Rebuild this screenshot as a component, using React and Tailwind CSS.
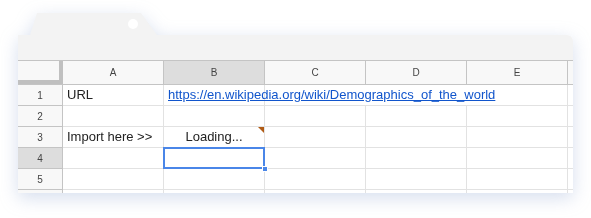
import React from 'react'

const COLS = ['A', 'B', 'C', 'D', 'E']
const font = { fontFamily: '"Liberation Sans", Arial, sans-serif' }

function HeaderCell({ label, active }) {
  return (
    <div
      className={`w-[101px] shrink-0 flex items-center justify-center text-[10px] text-[#444] border-r border-b border-[#c4c4c4] ${active ? 'bg-[#dddddd]' : 'bg-[#f8f8f8]'}`}
    >
      {label}
    </div>
  )
}

function Row({ n, active, children }) {
  return (
    <div className="flex h-[21px] shrink-0">
      <div
        className={`w-[45px] shrink-0 flex items-center justify-center text-[10px] text-[#444] border-r border-b border-[#c4c4c4] ${active ? 'bg-[#dddddd]' : 'bg-[#f8f8f8]'}`}
      >
        {n}
      </div>
      {children}
    </div>
  )
}

function Cell({ children, className = '' }) {
  return (
    <div className={`relative w-[101px] shrink-0 border-r border-b border-[#e2e2e2] text-[13px] text-[#222] flex items-center ${className}`}>
      {children}
    </div>
  )
}

function Empty({ count = 5 }) {
  return Array.from({ length: count }).map((_, i) => <Cell key={i} />)
}

export default function App() {
  return (
    <div className="w-[591px] h-[218px] bg-white overflow-hidden" style={font}>
      <div className="ml-[18px] pt-[13px] w-[555px] [filter:drop-shadow(0_5px_9px_rgba(120,145,200,0.3))]">
        <div className="relative ml-[12px] w-[127px] h-[22px] bg-[#f3f3f3] [clip-path:polygon(7px_0,111px_0,127px_100%,0_100%)]">
          <div className="absolute left-[98px] top-[6px] w-[10px] h-[10px] rounded-full bg-white" />
        </div>
        <div className="h-[158px] bg-white rounded-tr-[6px] overflow-hidden flex flex-col">
          <div className="h-[26px] shrink-0 bg-[#f3f3f3] border-b border-[#c4c4c4]" />
          <div className="flex h-[24px] shrink-0">
            <div className="relative w-[45px] shrink-0 bg-[#f8f8f8] border-b border-[#c4c4c4]">
              <div className="absolute right-0 top-0 bottom-0 w-[4px] bg-[#c0c0c0]" />
              <div className="absolute left-0 right-[4px] bottom-0 h-[4px] bg-[#c0c0c0]" />
            </div>
            {COLS.map(c => (
              <HeaderCell key={c} label={c} active={c === 'B'} />
            ))}
            <div className="w-[10px] shrink-0 bg-[#f8f8f8] border-b border-[#c4c4c4]" />
          </div>
          <Row n={1}>
            <Cell className="pl-[4px]">URL</Cell>
            <Cell className="pl-[4px] overflow-visible z-10">
              <span className="whitespace-nowrap text-[#1155cc] underline">
                https://en.wikipedia.org/wiki/Demographics_of_the_world
              </span>
            </Cell>
            <div className="w-[101px] shrink-0 border-b border-[#e2e2e2]" />
            <div className="w-[101px] shrink-0 border-b border-[#e2e2e2]" />
            <Cell />
            <Cell />
          </Row>
          <Row n={2}>
            <Empty count={6} />
          </Row>
          <Row n={3}>
            <Cell className="pl-[4px] whitespace-nowrap">Import here &gt;&gt;</Cell>
            <Cell className="justify-center">
              Loading...
              <div className="absolute right-0 top-0 w-0 h-0 border-t-[6px] border-l-[6px] border-t-[#b05b14] border-l-transparent" />
            </Cell>
            <Empty count={4} />
          </Row>
          <Row n={4} active>
            <Cell />
            <Cell>
              <div className="absolute -left-px -top-px w-[102px] h-[22px] border-2 border-[#4a86e8]" />
              <div className="absolute -right-[4px] -bottom-[4px] w-[6px] h-[6px] bg-[#4a86e8] border border-white z-10" />
            </Cell>
            <Empty count={4} />
          </Row>
          <Row n={5}>
            <Empty count={6} />
          </Row>
          <Row n="">
            <Empty count={6} />
          </Row>
        </div>
      </div>
    </div>
  )
}
